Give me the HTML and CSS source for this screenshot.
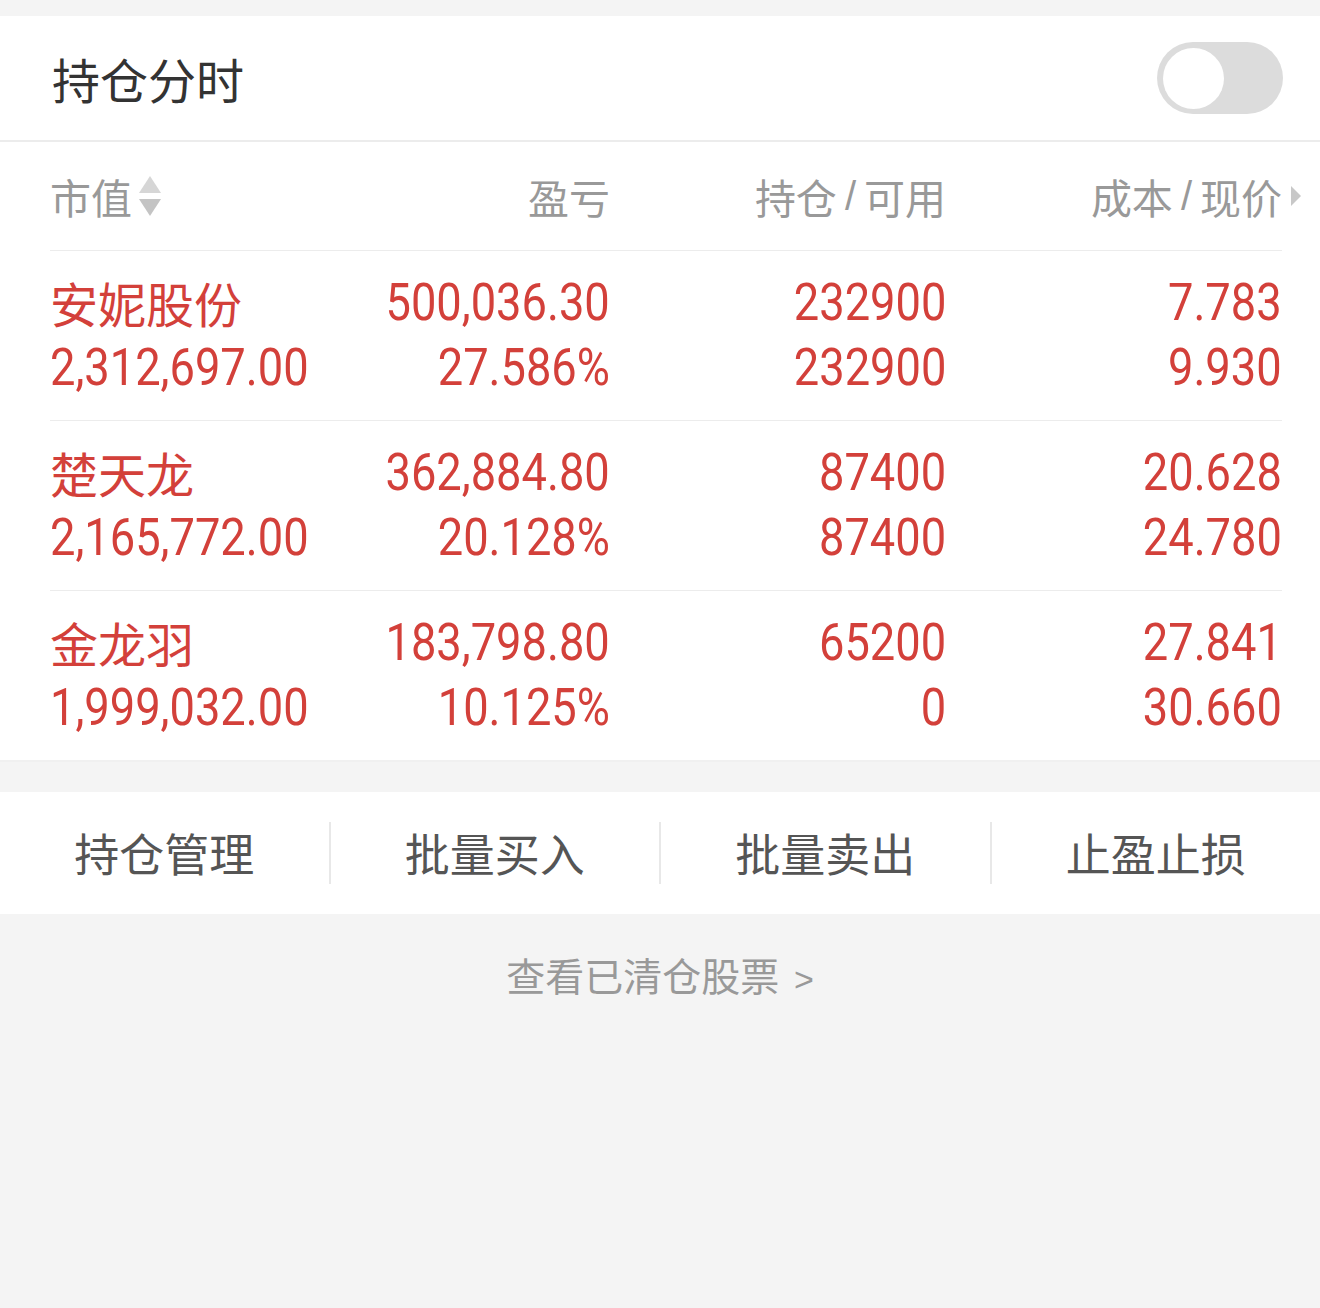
FILE: index.html
```html
<!DOCTYPE HTML>
<html>
<head>
<meta charset="utf-8">
<title>持仓</title>
<link rel="stylesheet" href="styles.css">
</head>
<body>
<div class="gap-top"></div>

<div class="switch-bar">
    <span class="switch-title">持仓分时</span>
    <span class="toggle"><span class="knob"></span></span>
</div>

<div class="holdings">
    <div class="row head">
        <div class="cell left">市值
            <svg class="sort" width="24" height="42" viewBox="0 0 24 42">
                <polygon points="12,1 23,18 1,18" fill="#d6d6d6"/>
                <polygon points="1,24 23,24 12,41" fill="#c4c4c4"/>
            </svg>
        </div>
        <div class="cell">盈亏</div>
        <div class="cell">持仓<i class="slash">/</i>可用</div>
        <div class="cell last">成本<i class="slash">/</i>现价
            <svg class="more" width="12" height="22" viewBox="0 0 12 22">
                <polygon points="1,1 11,11 1,21" fill="#c8c8c8"/>
            </svg>
        </div>
    </div>

    <div class="row">
        <div class="cell left"><span class="name">安妮股份</span><span class="num">2,312,697.00</span></div>
        <div class="cell"><span class="num">500,036.30</span><span class="num">27.586%</span></div>
        <div class="cell"><span class="num">232900</span><span class="num">232900</span></div>
        <div class="cell"><span class="num">7.783</span><span class="num">9.930</span></div>
    </div>

    <div class="row">
        <div class="cell left"><span class="name">楚天龙</span><span class="num">2,165,772.00</span></div>
        <div class="cell"><span class="num">362,884.80</span><span class="num">20.128%</span></div>
        <div class="cell"><span class="num">87400</span><span class="num">87400</span></div>
        <div class="cell"><span class="num">20.628</span><span class="num">24.780</span></div>
    </div>

    <div class="row">
        <div class="cell left"><span class="name">金龙羽</span><span class="num">1,999,032.00</span></div>
        <div class="cell"><span class="num">183,798.80</span><span class="num">10.125%</span></div>
        <div class="cell"><span class="num">65200</span><span class="num">0</span></div>
        <div class="cell"><span class="num">27.841</span><span class="num">30.660</span></div>
    </div>
</div>

<div class="actions">
    <a class="action">持仓管理</a>
    <a class="action">批量买入</a>
    <a class="action">批量卖出</a>
    <a class="action">止盈止损</a>
</div>

<p class="cleared">查看已清仓股票 <span class="gt">&gt;</span></p>
</body>
</html>
```

FILE: styles.css
```css
body {margin: 0; background: #f4f4f4; font-family: "Noto Sans CJK SC", "Noto Sans", sans-serif;}
.gap-top {height: 16px;}

.switch-bar {height: 124px; background: #fff; display: flex; align-items: center; justify-content: space-between; padding: 0 37px 0 52px; border-bottom: 2px solid #ececec;}
.switch-title {font-size: 48px; color: #333;}
.toggle {width: 126px; height: 72px; border-radius: 36px; background: #dcdcdc; display: flex; align-items: center; padding-left: 6px; box-sizing: border-box;}
.knob {width: 61px; height: 61px; border-radius: 50%; background: #fff;}

.holdings {background: #fff; padding: 0 38px 0 50px; border-bottom: 2px solid #f0f0f0;}
.row {display: grid; grid-template-columns: 250px 310px 336px 336px; border-bottom: 1px solid #ececec; padding: 19px 0 20px;}
.row:last-child {border-bottom: none;}
.cell {display: flex; flex-direction: column; align-items: flex-end; line-height: 65px;}
.cell.left {align-items: flex-start;}

.head {padding: 0; height: 108px;}
.head .cell {flex-direction: row; align-items: center; justify-content: flex-end; font-size: 41px; color: #999; line-height: 108px;}
.head .cell.left {justify-content: flex-start;}
.head .cell.last {margin-right: -20px;}
.slash {font-style: normal; font-family: "Liberation Sans", sans-serif; font-size: 40px; margin: 0 8px;}
.sort {margin-left: 6px;}
.more {margin-left: 8px;}

.name {font-size: 48px; color: #d3403a;}
.num {display: inline-block; font-family: "Roboto", sans-serif; font-size: 52px; color: #d3403a; transform: scaleX(0.87); transform-origin: right center;}
.left .num {transform-origin: left center;}

.actions {margin-top: 30px; height: 122px; background: #fff; display: flex; align-items: center;}
.action {flex: 1; text-align: center; font-size: 45px; color: #555; line-height: 62px; border-left: 2px solid #e8e8e8;}
.action:first-child {border-left: none;}

.cleared {margin: 0; text-align: center; font-size: 39px; color: #999; line-height: 60px; padding-top: 30px;}
.gt {font-family: "Liberation Sans", sans-serif; font-size: 34px; margin-left: 6px;}
```
